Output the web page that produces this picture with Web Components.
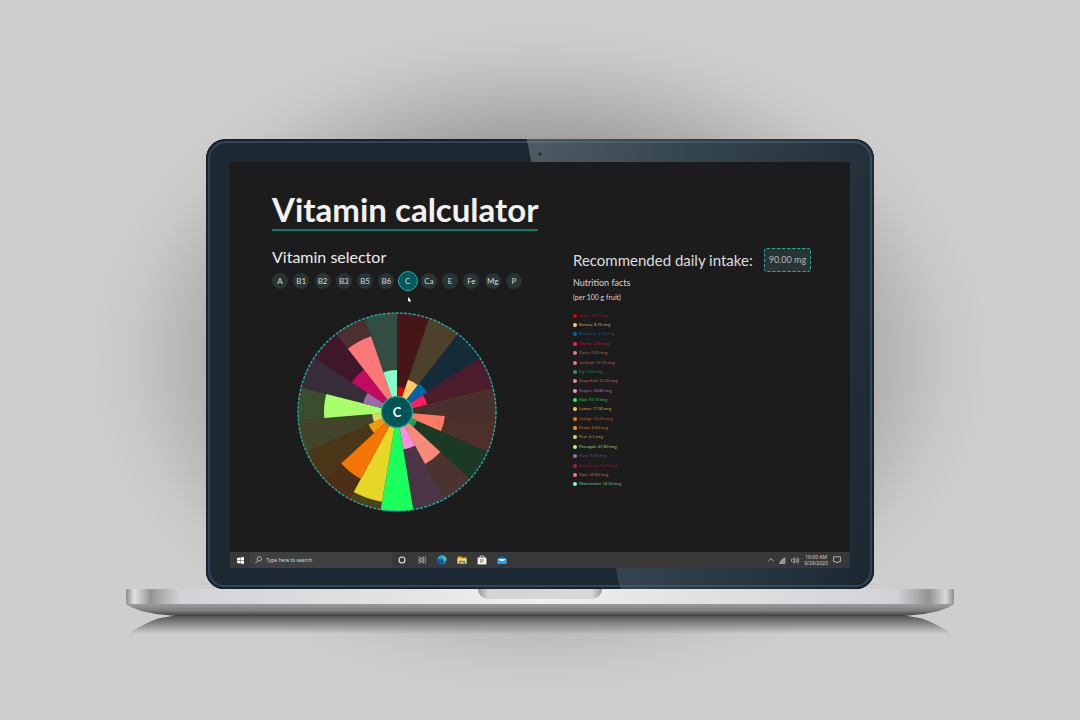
<!DOCTYPE html>
<html lang="en">
<head>
<meta charset="utf-8">
<title>Vitamin calculator</title>
<style>
  body { margin: 0; background: #cecece; font-family: Lato, sans-serif; }
</style>
</head>
<body>
<laptop-stage>
  <laptop-frame>
    <vitamin-app></vitamin-app>
    <task-bar></task-bar>
  </laptop-frame>
</laptop-stage>

<script>
const define = (name, html, setup) => customElements.define(name, class extends HTMLElement {
  constructor() {
    super();
    this.attachShadow({ mode: 'open' }).innerHTML = html;
    if (setup) setup(this.shadowRoot);
  }
});

define('laptop-stage', `
<style>
  :host { display: block; box-sizing: border-box; min-height: 100vh; padding: 139px 126px 40px;
    background: radial-gradient(ellipse 450px 335px at 50% 358px, #808080 0, #8c8c8c 50%, #a2a2a2 66%, #b6b6b6 78%, #c8c8c8 91%, #cecece 100%); }
</style>
<slot></slot>`);

define('laptop-frame', `
<style>
  :host { display: block; }
  .lid { position: relative; margin: 0 80px; padding: 23px 24px 21px; border-radius: 20px 20px 18px 18px;
    background: #1c2932; box-shadow: inset 0 0 0 2px #1c2024, inset 0 0 0 4px #2e4560; }
  .glare { position: absolute; inset: 0; border-radius: inherit;
    clip-path: polygon(48% 0, 100% 0, 100% 100%, 62% 100%);
    background: linear-gradient(100deg, #76848c88 45%, #5f748060 65%, #5f748000 98%); }
  .camera { position: absolute; top: 12px; left: 50%; width: 4px; height: 4px; border-radius: 50%;
    margin-left: -3px; border: 1px solid #5c6064; background: #2a3238; }
  .screen { position: relative; background: #1c1c1c; }
  .deck { position: relative; height: 15px;
    background: linear-gradient(90deg, #8d8d90 0, #e0e0e2 1%, #bcbcbe 2%, #939397 3%, #a8a8ab 4%, #d2d3d7 6.5%, #e0e1e3 30%, #f0f0f0 50%, #e4e4e6 65%, #d2d3d7 93%, #b4b4b7 95%, #939397 97%, #d9d9db 99%, #8d8d90 100%); }
  .notch { width: 124px; height: 10px; margin: 0 auto; border-radius: 0 0 10px 10px;
    background: linear-gradient(90deg, #97979a, #d4d4d6 8%, #d8d8da 92%, #97979a); }
  .belly { height: 12px; background: linear-gradient(#9b9c9e, #7d7e80 55%, #3c3d3f);
    clip-path: polygon(0 0, 6px 30%, 16px 60%, 30px 84%, 50px 100%, calc(100% - 50px) 100%, calc(100% - 30px) 84%, calc(100% - 16px) 60%, calc(100% - 6px) 30%, 100% 0); }
  .shadow { height: 18px; margin: 0 2px; background: linear-gradient(#555, #8a8a8a 45%, #cecece00);
    clip-path: polygon(0 100%, 10px 65%, 20px 36%, 30px 14%, 44px 0, calc(100% - 44px) 0, calc(100% - 30px) 14%, calc(100% - 20px) 36%, calc(100% - 10px) 65%, 100% 100%); }
</style>
<div class="lid">
  <div class="glare"></div><div class="camera"></div>
  <div class="screen"><slot></slot></div>
</div>
<div class="deck"><div class="notch"></div></div>
<div class="belly"></div>
<div class="shadow"></div>`);

define('vitamin-app', `
<style>
  :host { display: block; padding: 27px 38px 40px 42px; color: #ececec; }
  h1 { margin: 0 0 15px; width: fit-content; font-size: 33px; line-height: 40px; font-weight: 700;
    color: #f2f2f2; border-bottom: 2px solid #0c7b78; white-space: nowrap; }
  main { display: grid; grid-template-columns: minmax(0, 1fr) 239px; }
  vitamin-wheel { margin: 20px 0 0 25px; }
</style>
<h1>Vitamin calculator</h1>
<main>
  <section>
    <vitamin-selector></vitamin-selector>
    <vitamin-wheel></vitamin-wheel>
  </section>
  <nutrition-facts></nutrition-facts>
</main>`);

define('vitamin-selector', `
<style>
  :host { display: block; position: relative; width: 250px; }
  h2 { margin: 0 0 3px; font-size: 16px; line-height: 22px; font-weight: 400; }
  .row { display: flex; justify-content: space-between; align-items: center; height: 20px; }
  button { display: flex; align-items: center; justify-content: center; box-sizing: border-box; width: 16px; height: 16px;
    padding: 0; border: 0; border-radius: 50%; background: #293434; color: #d8d8d8; font: 8px/10px Lato, sans-serif; }
  button[aria-pressed=true] { width: 20px; height: 20px; margin: 0 -2px; border: 1px solid #20b2aa; background: #00595a; }
  svg { position: absolute; left: 136px; top: 51px; }
</style>
<h2>Vitamin selector</h2>
<div class="row"></div>
<svg width="4" height="6" viewBox="0 0 4 6"><path d="M0 0v4.600l1-.8.8 1.800.9-.4-.8-1.700H3.400z" fill="#fff"/></svg>`, root => {
  root.querySelector('.row').innerHTML = ['A', 'B1', 'B2', 'B3', 'B5', 'B6', 'C', 'Ca', 'E', 'Fe', 'Mg', 'P']
    .map(v => `<button type="button" aria-pressed="${v === 'C'}">${v}</button>`).join('');
});

/* name, amount, colour, slice radius, label colour */
const fruits = [
  ['Apple', '4.69', '#dd0000', 25, '#8f1616'],
  ['Banana', '8.70', '#ffca6a', 34, '#d0a658'],
  ['Blueberry', '9.70', '#0064a6', 36, '#125a8c'],
  ['Cherry', '7.00', '#ff1f60', 31, '#b81e4c'],
  ['Dates', '0.00', '#e97c6c', 0, '#ac6254'],
  ['Jackfruit', '19.70', '#ff7a60', 48, '#be604c'],
  ['Fig', '2.00', '#17a64c', 22, '#188a44'],
  ['Grapefruit', '31.20', '#f88a78', 59, '#bc6650'],
  ['Grapes', '10.80', '#f78fdc', 38, '#ae6ea4'],
  ['Kiwi', '92.70', '#1aff5c', 99, '#1ccc4e'],
  ['Lemon', '77.00', '#e6d628', 91, '#c2ac28'],
  ['Orange', '53.20', '#f57505', 76, '#c06014'],
  ['Peach', '6.60', '#f39a0a', 31, '#bc7c1a'],
  ['Pear', '4.1', '#d3dc60', 25, '#a4a048'],
  ['Pineapple', '47.80', '#a8ff6c', 73, '#8cd45c'],
  ['Plum', '9.50', '#9a6ba6', 35, '#62536e'],
  ['Raspberry', '26.20', '#c20b60', 54, '#84164a'],
  ['Cper', '59.80', '#fc7777', 80, '#cc6666'],
  ['Watermelon', '14.20', '#84ffc9', 42, '#6cc09c']
];

define('vitamin-wheel', `
<style>
  :host { display: block; width: 200px; height: 201px; }
  svg { display: block; }
  text { font: 700 13px Lato, sans-serif; fill: #fff; text-anchor: middle; }
</style>
<svg width="200" height="201" viewBox="-100 -101 200 201" role="img" aria-label="Vitamin C by fruit">
  <g class="slices"></g>
  <circle r="99" fill="none" stroke="#20b2aa" stroke-width="1.300" stroke-dasharray="3 1.300"/>
  <circle r="15.500" fill="#005556" stroke="#1fa79f" stroke-width="1.200"/>
  <text y="5">C</text>
</svg>`, root => {
  const step = Math.PI * 2 / fruits.length;
  const wedge = (i, r) => {
    const p = a => `${(Math.sin(a) * r).toFixed(2)} ${(-Math.cos(a) * r).toFixed(2)}`;
    return `M0 0L${p(i * step)}A${r} ${r} 0 0 1 ${p((i + 1) * step)}Z`;
  };
  root.querySelector('.slices').innerHTML = fruits.map(([, , color, r], i) =>
    `<path d="${wedge(i, 99)}" fill="${color}" opacity=".22"/>` + (r ? `<path d="${wedge(i, r)}" fill="${color}"/>` : '')).join('');
});

define('nutrition-facts', `
<style>
  :host { display: block; padding-top: 2px; }
  .intake { display: flex; align-items: center; gap: 8px; height: 24px; margin-bottom: 4px; white-space: nowrap; }
  h2 { margin: 0; width: 183px; font-size: 15px; line-height: 24px; font-weight: 400; color: #dcdcdc; }
  output { box-sizing: border-box; width: 47px; height: 24px; border: 1px dashed #20b2aa; border-radius: 3px; background: #293434;
    color: #b4b8b8; font-size: 9px; line-height: 22px; text-align: center; }
  h3, p { margin: 0; line-height: 14px; font-weight: 400; color: #d4d4d4; }
  h3 { font-size: 9px; }
  p { font-size: 7px; }
  ul { display: grid; grid-auto-rows: 1fr; height: 178px; margin: 7px 0 0; padding: 0; list-style: none; }
  li { display: flex; align-items: center; gap: 2px; font-size: 4px; line-height: 8px; white-space: nowrap; }
  i { width: 4px; height: 4px; border-radius: 50%; }
</style>
<div class="intake"><h2>Recommended daily intake:</h2><output>90.00 mg</output></div>
<h3>Nutrition facts</h3>
<p>(per 100 g fruit)</p>
<ul></ul>`, root => {
  root.querySelector('ul').innerHTML = fruits.map(([name, amount, color, , label]) =>
    `<li><i style="background:${color}"></i><span style="color:${label}">${name}: ${amount} mcg</span></li>`).join('');
});

define('task-bar', `
<style>
  :host { display: flex; align-items: center; height: 16px; background: #383838; color: #d0d0d0; font: 5px/6px "Noto Sans", sans-serif; }
  button { display: flex; align-items: center; justify-content: center; width: 20px; height: 16px; padding: 0; border: 0; background: none; }
  label { display: flex; align-items: center; gap: 4px; box-sizing: border-box; width: 142px; height: 16px; padding-left: 5px; background: #3e403f; }
  input { flex: 1; min-width: 0; padding: 0; border: 0; background: none; color: inherit; font: inherit; }
  input::placeholder { color: #d8d8d8; opacity: 1; }
  .apps { display: flex; flex: 1; }
  .tray { display: flex; align-items: center; gap: 5px; padding-right: 9px; }
  time { text-align: center; white-space: nowrap; font-size: 5px; }
</style>
<button type="button" aria-label="Start"><svg width="7" height="7" viewBox="0 0 7 7"><path d="M0 1l3-.5v2.800H0zM3.400.4L7 0v3.300H3.400zM0 3.700h3v2.800L0 6zM3.400 3.700H7V7l-3.600-.5z" fill="#fff"/></svg></button>
<label aria-label="Search"><svg width="7" height="8" viewBox="0 0 7 8" fill="none" stroke="#c8c8c8" stroke-width=".8"><circle cx="4.300" cy="2.800" r="2.200"/><path d="M2.800 4.500L.4 7.400"/></svg><input type="text" placeholder="Type here to search"></label>
<div class="apps">
  <button type="button" aria-label="Cortana"><svg width="8" height="8" viewBox="0 0 8 8"><circle cx="4" cy="4" r="3" fill="none" stroke="#e4e4e4" stroke-width="1.100"/></svg></button>
  <button type="button" aria-label="Task view"><svg width="8" height="8" viewBox="0 0 8 8" fill="none" stroke="#b8b8b8" stroke-width=".8"><path d="M1 .5v1.500h4.500V.5M1 7.500V6h4.500v1.500M1 3h4.500v2H1zM7.200.5v7"/></svg></button>
  <button type="button" aria-label="Edge"><svg width="10" height="10" viewBox="0 0 10 10"><circle cx="5" cy="5" r="4.600" fill="#0c7fd0"/><path d="M.6 4C1.500 1.200 3.500.4 5 .4c3 0 4.800 2.200 4.600 4.200C9.400 6 8 6.600 6.300 6.200c.6-1.200 0-2.700-1.700-2.900C2.800 3 1.200 3.400.6 4z" fill="#3fc9a0"/><path d="M.6 4C1.500 1.200 3.500.4 5 .4c1.500 0 2.600.5 3.400 1.300C6 1.500 5 2.500 4.600 3.300 2.800 3 1.200 3.400.6 4z" fill="#27a9e0"/><path d="M3.200 5c-.4 2 1 4 3.600 4.200C3.800 10.400 1 8.300 1.200 5.600c.5-1 1.300-1.300 2-.6z" fill="#0a4f9e"/><path d="M4.400 4.200c1.200 0 1.800.8 1.500 1.900-.3.800.5 1.300 1.700 1.300-1.500 1-3.900.1-3.900-1.800 0-.7.300-1.200.7-1.400z" fill="#26384a"/></svg></button>
  <button type="button" aria-label="Explorer"><svg width="10" height="8" viewBox="0 0 10 8"><path d="M.5.5h3.700l1 1h4.300v6h-9z" fill="#e8a822"/><path d="M.5 2.500h9v5h-9z" fill="#ffd768"/><path d="M2 7.800V4.800h6v3H6.700V6.300H3.300v1.500z" fill="#2a8fe0"/></svg></button>
  <button type="button" aria-label="Store"><svg width="10" height="10" viewBox="0 0 10 10"><path d="M3.200 3V1h3.600v2" fill="none" stroke="#eee" stroke-width=".8"/><path d="M.6 2.600h8.800v6.800H.6z" fill="#f4f4f4"/><path d="M3.200 4.200h1.600v1.600H3.200z" fill="#e05030"/><path d="M5.200 4.200h1.600v1.600H5.200z" fill="#70a830"/><path d="M3.200 6.200h1.600v1.600H3.200z" fill="#2898d8"/><path d="M5.200 6.200h1.600v1.600H5.200z" fill="#e8b420"/></svg></button>
  <button type="button" aria-label="Mail"><svg width="10" height="8" viewBox="0 0 10 8"><path d="M.4 2.500L5 .2l4.600 2.300v5.300H.4z" fill="#0f6dbb"/><path d="M1.500 2.800h7v2.400h-7z" fill="#f4f8fc"/><path d="M.4 3L5 5.500 9.600 3v4.800H.4z" fill="#2ba5ee"/></svg></button>
</div>
<div class="tray">
  <svg width="6" height="6" viewBox="0 0 6 6"><path d="M.4 4.200L3 1.700l2.600 2.500" fill="none" stroke="#ccc" stroke-width=".8"/></svg>
  <svg width="7" height="7" viewBox="0 0 7 7"><path d="M.4 6.500C.6 3.400 3 .8 6.500.6v5.900z" fill="#777"/><path d="M.4 6.500L6.300.8M2.500 6.500c0-2 1.800-3.700 4-3.700M4.400 6.500c0-1 .9-2 2.100-2M.4 6.500h6" fill="none" stroke="#ccc" stroke-width=".6"/></svg>
  <svg width="8" height="7" viewBox="0 0 8 7" fill="none" stroke="#ccc" stroke-width=".7"><path d="M.4 2.400h1.200L3.400.8v5.400L1.600 4.600H.4zM4.500 2.200c.7.700.7 1.900 0 2.600M5.500 1.300c1.200 1.200 1.200 3.200 0 4.400M6.500.5c1.600 1.700 1.600 4.300 0 6"/></svg>
  <time>10:00 AM<br>9/29/2020</time>
  <svg width="8" height="8" viewBox="0 0 8 8"><path d="M.6.8h6.800v5H5L4 7 3 5.800H.6z" fill="none" stroke="#ccc" stroke-width=".8"/></svg>
</div>`);
</script>
</body>
</html>
